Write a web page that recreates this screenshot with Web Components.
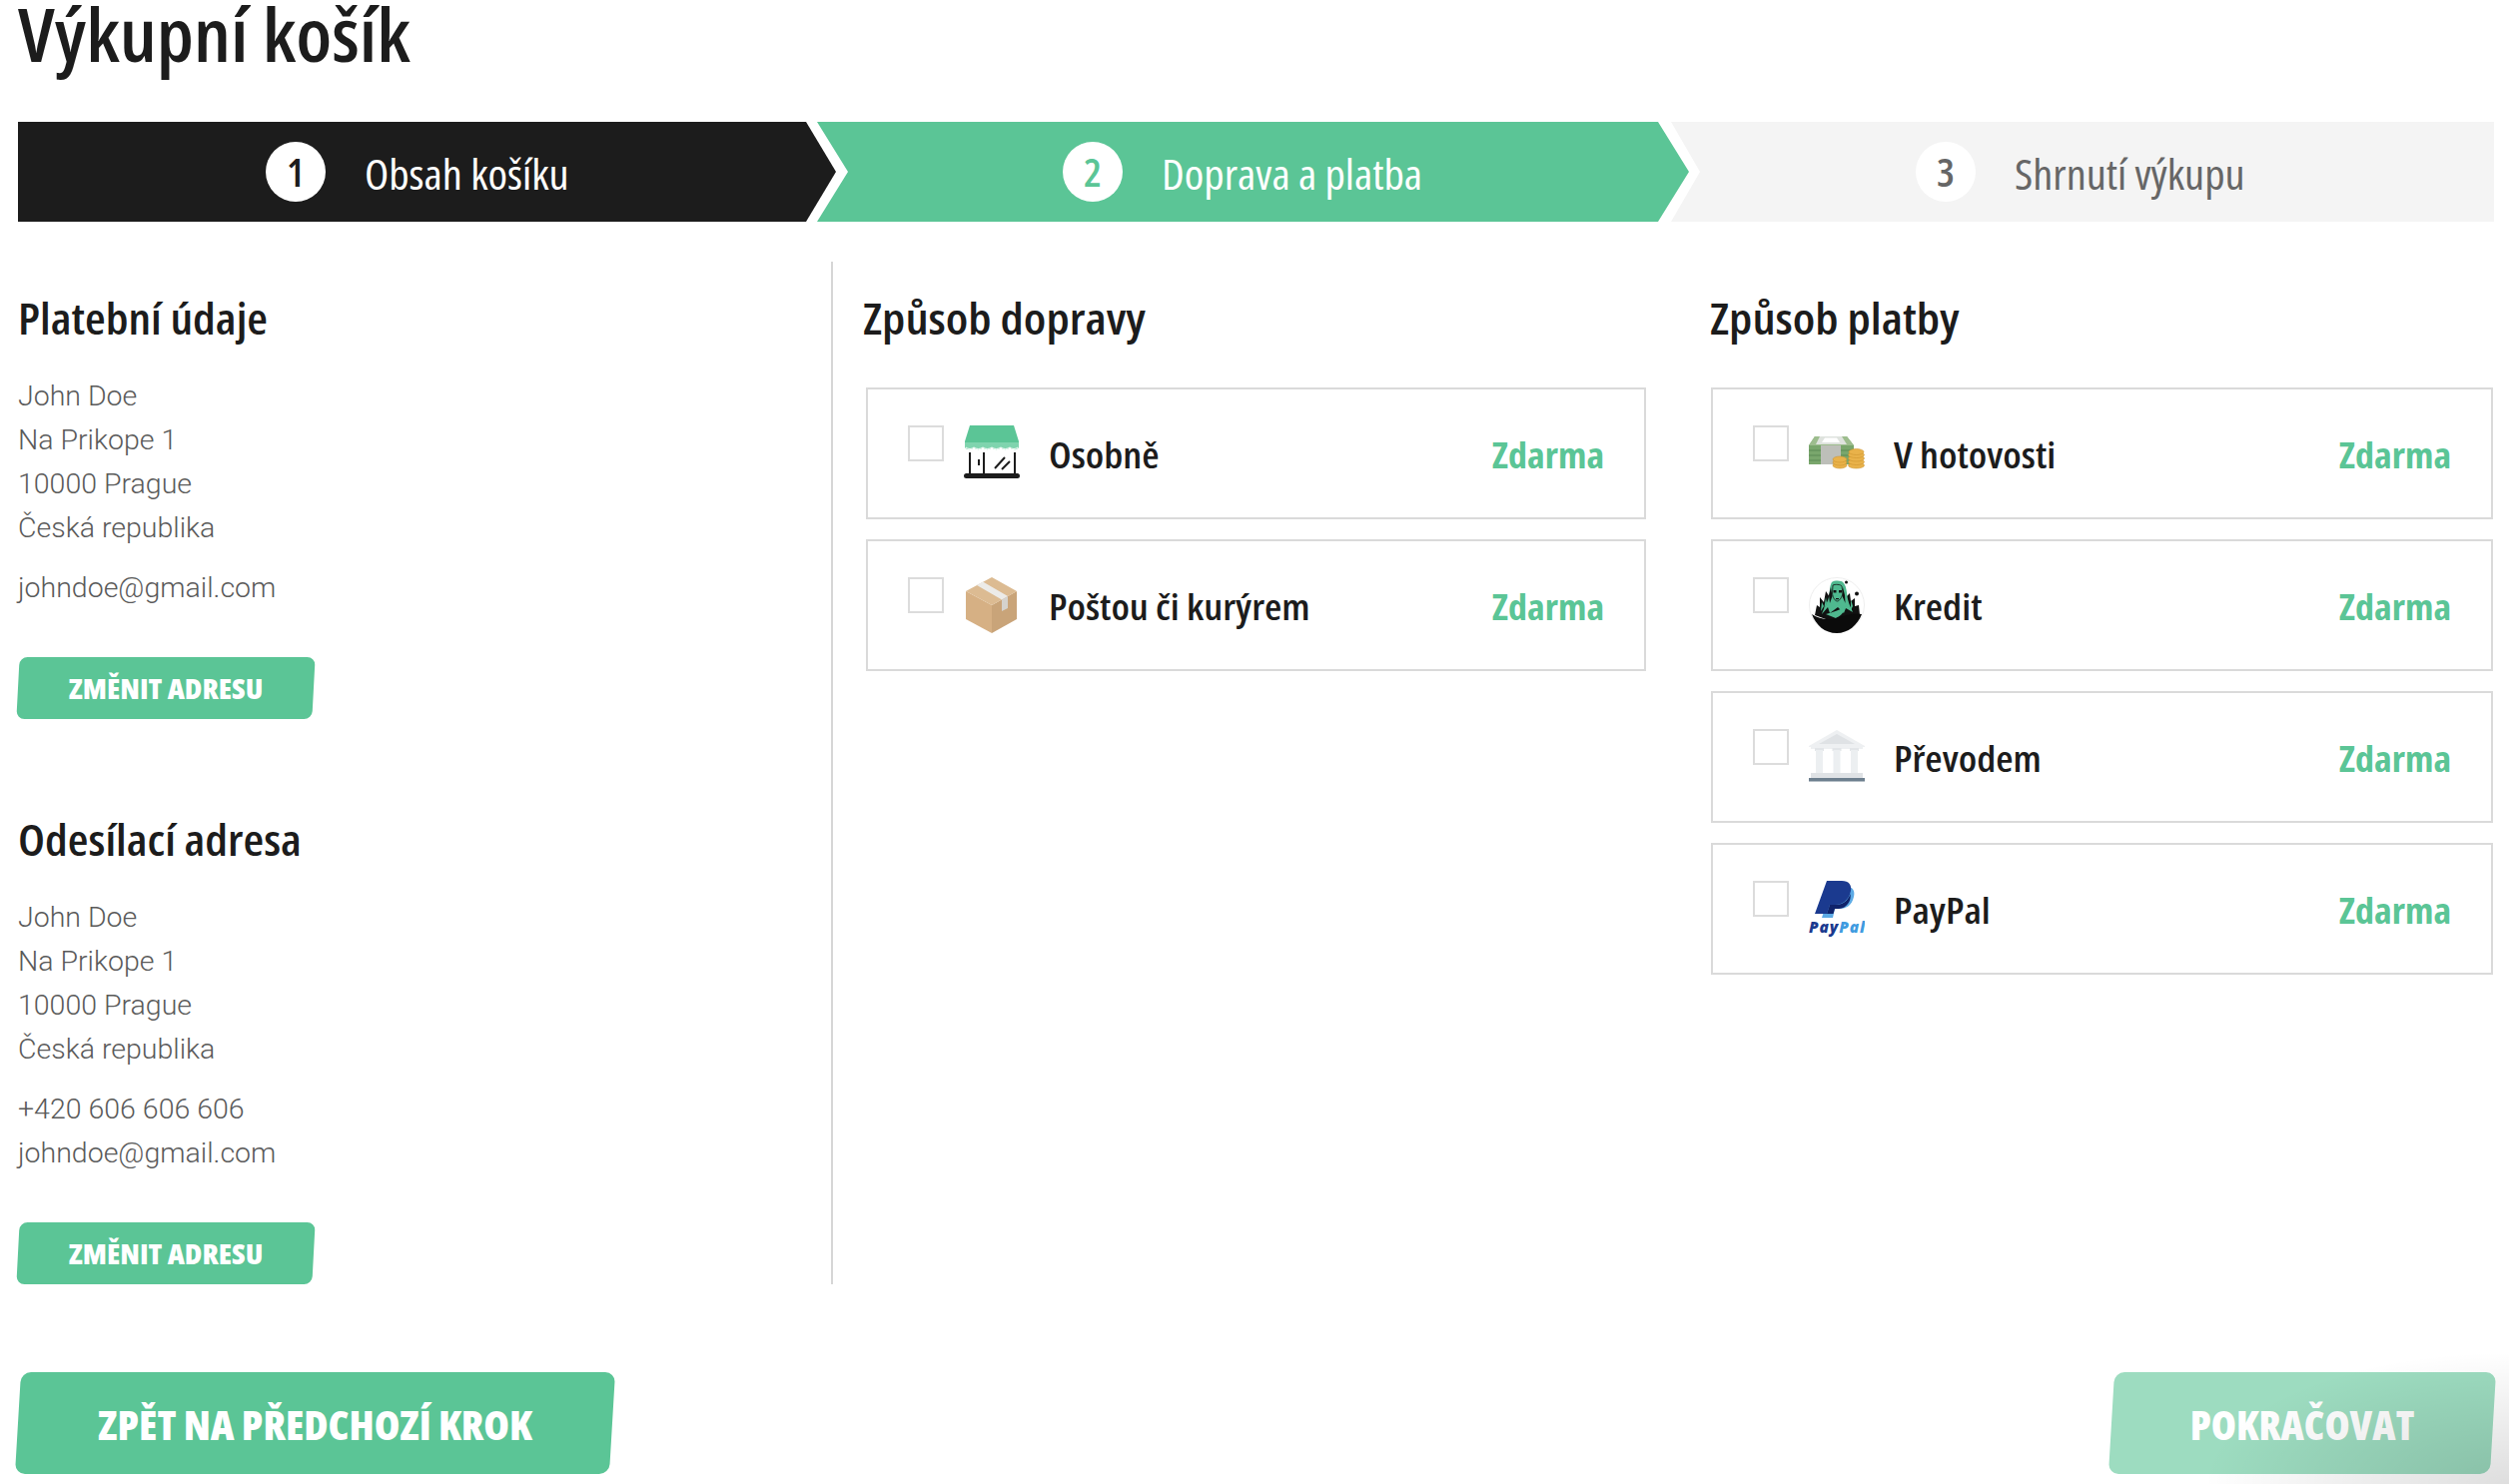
<!DOCTYPE html>
<html lang="cs"><head><meta charset="utf-8"><title>Výkupní košík</title>
<style>
html,body{margin:0;padding:0;background:#fff}
body{font-family:"Open Sans","Liberation Sans",sans-serif;color:#1c1c1c;width:2512px;height:1486px;overflow:hidden;position:relative}
</style></head><body>
<checkout-page>
  <checkout-steps slot="steps">
    <step-item num="1" state="done" style="--w:819px;--pad:248px" label="Obsah košíku"></step-item>
    <step-item num="2" state="active" style="--w:873px;--pad:246px" label="Doprava a platba"></step-item>
    <step-item num="3" state="todo" style="--w:824px;--pad:245px" label="Shrnutí výkupu"></step-item>
  </checkout-steps>
  <div slot="address">
    <address-block heading="Platební údaje" style="--after:64px">
      <div>John Doe</div><div>Na Prikope 1</div><div>10000 Prague</div><div>Česká republika</div>
      <div style="margin-top:16px">johndoe@gmail.com</div>
    </address-block>
    <address-block heading="Odesílací adresa" style="--after:0px">
      <div>John Doe</div><div>Na Prikope 1</div><div>10000 Prague</div><div>Česká republika</div>
      <div style="margin-top:16px">+420 606 606 606</div><div>johndoe@gmail.com</div>
    </address-block>
  </div>
  <option-group slot="shipping" heading="Způsob dopravy" style="--inset:3px">
    <option-card label="Osobně"><store-icon slot="icon"></store-icon></option-card>
    <option-card label="Poštou či kurýrem"><box-icon slot="icon"></box-icon></option-card>
  </option-group>
  <option-group slot="payment" heading="Způsob platby" style="--inset:1px">
    <option-card label="V hotovosti"><cash-icon slot="icon"></cash-icon></option-card>
    <option-card label="Kredit"><kredit-icon slot="icon"></kredit-icon></option-card>
    <option-card label="Převodem"><bank-icon slot="icon"></bank-icon></option-card>
    <option-card label="PayPal"><paypal-icon slot="icon"></paypal-icon></option-card>
  </option-group>
  <action-button slot="back" size="lg" stretch="1.034" style="--w:595px">ZPĚT NA PŘEDCHOZÍ KROK</action-button>
  <action-button slot="next" size="lg" stretch="1.015" disabled style="--w:382px">POKRAČOVAT</action-button>
</checkout-page>
<script>
function def(name,html){
  customElements.define(name,class extends HTMLElement{
    constructor(){super();this.attachShadow({mode:'open'});}
    connectedCallback(){this.shadowRoot.innerHTML=typeof html==='function'?html(this):html;}
  });
}
const CF='"Open Sans",sans-serif;font-stretch:75%';
def('checkout-page',`<style>
:host{display:block;padding:0 16px 0 18px;box-sizing:border-box;width:2512px}
h1{margin:0 0 55px;font:600 74px/67px ${CF};color:#1c1c1c;transform:scaleX(1.05);transform-origin:0 0;width:max-content}
.main{display:grid;grid-template-columns:816px 814px 1fr;margin-top:40px;height:1021px}
.left{border-right:2px solid #d6d6d6;box-sizing:border-box}
.mid{padding-left:30px}
.right{padding-left:64px}
.foot{display:flex;justify-content:space-between;margin-top:91px}
.corner{position:absolute;right:0;bottom:0;width:300px;height:130px;background:radial-gradient(ellipse at 100% 100%,rgba(0,0,0,.13),rgba(0,0,0,.05) 45%,rgba(0,0,0,0) 72%);pointer-events:none}
</style>
<h1>Výkupní košík</h1>
<slot name="steps"></slot>
<div class="main"><div class="left"><slot name="address"></slot></div><div class="mid"><slot name="shipping"></slot></div><div class="right"><slot name="payment"></slot></div></div>
<div class="foot"><slot name="back"></slot><slot name="next"></slot></div>
<div class="corner"></div>`);
def('checkout-steps',`<style>:host{display:flex;height:100px}::slotted(step-item:not(:first-child)){margin-left:-19px}::slotted(step-item:last-child){margin-left:-18px}</style><slot></slot>`);
def('step-item',el=>{
 const s=el.getAttribute('state');
 const bg={done:'#1c1c1c',active:'#5bc596',todo:'#f4f4f4'}[s];
 const fg={done:'#fff',active:'#fff',todo:'#666'}[s];
 const num={done:'#1c1c1c',active:'#5bc596',todo:'#666'}[s];
 const clip={done:'polygon(0 0,789px 0,100% 50%,789px 100%,0 100%)',
  active:'polygon(0 0,842px 0,100% 50%,842px 100%,0 100%,31px 50%)',
  todo:'polygon(0 0,100% 0,100% 100%,0 100%,29px 50%)'}[s];
 return `<style>:host{display:flex;align-items:center;box-sizing:border-box;flex:none;width:var(--w);height:100px;padding-left:var(--pad);gap:39px;background:${bg};clip-path:${clip};position:relative}
 .c{width:60px;height:60px;border-radius:50%;background:#fff;color:${num};display:flex;align-items:center;justify-content:center;font:600 40px/1 ${CF}}
 .t{font:500 41px/1 ${CF};color:${fg};position:relative;top:2px;transform:scaleX(1.085);transform-origin:0 50%}</style>
 <span class="c">${el.getAttribute('num')}</span><span class="t">${el.getAttribute('label')}</span>`;
});
def('address-block',el=>`<style>:host{display:block;padding-top:30px;margin-bottom:var(--after)}
h2{margin:0 0 31px;font:600 44px/52px ${CF};color:#1c1c1c;transform:scaleX(1.08);transform-origin:0 0;width:max-content}
.b{font:300 28.5px/44px Roboto,sans-serif;color:#5a5a5a}
action-button{margin-top:47px}</style>
<h2>${el.getAttribute('heading')}</h2><div class="b"><slot></slot></div><action-button stretch="1.07" style="--w:296px">ZMĚNIT ADRESU</action-button>`);
def('action-button',el=>{
 const lg=el.getAttribute('size')==='lg',dis=el.hasAttribute('disabled');
 return `<style>:host{display:block;position:relative;width:var(--w);height:${lg?102:62}px}
 .bg{position:absolute;inset:0;background:${dis?'#9ddcc0':'#5bc596'};border-radius:${lg?10:8}px;transform:skewX(${lg?-3.4:-3}deg)}
 .t{position:relative;display:flex;align-items:center;justify-content:center;height:100%;top:${lg?2:0}px;color:#fff;font:800 ${lg?40:28}px/1 ${CF};white-space:nowrap;transform:scaleX(${el.getAttribute('stretch')||1})}
 </style><div class="bg"></div><div class="t"><slot></slot></div>`;
});
def('option-group',el=>`<style>:host{display:block;padding-top:30px}
h2{margin:0 0 44px;font:600 44px/52px ${CF};color:#1c1c1c;transform:scaleX(1.105);transform-origin:0 0;width:max-content}
.l{display:flex;flex-direction:column;gap:20px;margin-left:var(--inset)}</style>
<h2>${el.getAttribute('heading')}</h2><div class="l"><slot></slot></div>`);
def('option-card',el=>`<style>:host{display:flex;align-items:center;box-sizing:border-box;height:132px;border:2px solid #dadada;padding:0 40px 0 40px}
.cb{width:36px;height:36px;box-sizing:border-box;border:2px solid #dcdcdc;align-self:flex-start;margin-top:36px;flex:none}
.i{width:56px;height:56px;margin-left:20px;flex:none;display:block}
.w{margin-left:29px;flex:1}
.n{display:inline-block;font:600 36px/1 ${CF};color:#1c1c1c;position:relative;top:2px;transform:scaleX(1.105);transform-origin:0 50%}
.p{font:700 36px/1 ${CF};color:#5bc596;position:relative;top:2px;transform:scaleX(1.06);transform-origin:100% 50%}</style>
<span class="cb"></span><span class="i"><slot name="icon"></slot></span><span class="w"><span class="n">${el.getAttribute('label')}</span></span><span class="p">Zdarma</span>`);
const svg=b=>`<style>:host{display:block;width:56px;height:56px}svg{display:block}</style><svg width="56" height="56" viewBox="0 0 56 56" fill="none">${b}</svg>`;
def('store-icon',svg(`
<path d="M6 0H50L55 16V18H1V16Z" fill="#5bc596"/>
<path d="M1 17H55V22C53 25 48 25 46 22C44 25 39 25 37 22C35 25 30 25 28 22C26 25 21 25 19 22C17 25 12 25 10 22C8 25 3 25 1 22Z" fill="#7fd4ae"/>
<path d="M2 22c2 2 6 2 8 0c2 2 7 2 9 0c2 2 7 2 9 0c2 2 7 2 9 0c2 2 7 2 9 0c2 2 6 2 8 0" stroke="#fff" stroke-width="1"/>
<rect y="48" width="56" height="5" rx="2.5" fill="#1c1c1c"/>
<path d="M6 27V49M20 27V49M51 27V49" stroke="#1c1c1c" stroke-width="2"/>
<path d="M15 34V40M31 43L41 32M38 44L46 36" stroke="#1c1c1c" stroke-width="2"/>`));
def('box-icon',svg(`
<path d="M2 14L28 28V56L2 42Z" fill="#d6b084"/>
<path d="M53 14L28 28V56L53 42Z" fill="#c9a479"/>
<path d="M2 14L28 0L53 14L28 28Z" fill="#dcbb92"/>
<path d="M13 8L19 4.500L44 19L38 22.500Z" fill="#ecebe8"/>
<path d="M38 22.500L44 19V31L38 34Z" fill="#d5d2cd"/>`));
def('cash-icon',svg(`
<path d="M6 11H38L45 20V39H0V20Z" fill="#79a66c"/>
<path d="M6 11H38L45 20H0Z" fill="#9dbd8e"/>
<path d="M11 11H33L38 19H7Z" fill="#dfe3de"/>
<path d="M16 12.500H28L31 17H13Z" fill="#fff"/>
<rect x="12" y="20" width="20" height="19" fill="#bdbfb9"/>
<path d="M0 25H12M0 30H12M0 35H12M32 25H45M32 30H45" stroke="#5d8a55" stroke-width="1"/>
<g fill="#e9b24a" stroke="#cf962f" stroke-width=".6">
<ellipse cx="31" cy="40" rx="7" ry="3"/><ellipse cx="31" cy="37" rx="7" ry="3"/><ellipse cx="31" cy="34" rx="7" ry="3"/>
<ellipse cx="47.500" cy="40" rx="8" ry="3"/><ellipse cx="47.500" cy="36.500" rx="8" ry="3"/><ellipse cx="47.500" cy="33" rx="8" ry="3"/><ellipse cx="47.500" cy="29.500" rx="8" ry="3"/><ellipse cx="47.500" cy="26.500" rx="7.500" ry="3"/></g>`));
def('kredit-icon',svg(`
<circle cx="28" cy="28" r="27.500" fill="#fff" stroke="#eee"/>
<path d="M6 38L8 28L11 30L11 20L15 25L17 14L21 20L22 8L36 8L37 20L41 16L42 24L46 21L46 29L50 28L51 38L28 46Z" fill="#111"/>
<path d="M23 5C26 3 33 3 35 6C38 10 38 17 39 22C40 27 42 30 44 35L37 31L35 36L29 30L21 36L19 30L13 37C15 31 18 27 20 20C21 14 21 8 23 5Z" fill="#4fb98f"/>
<path d="M24 8C26 7 32 7 33 9L34 16C33 21 30 24 28.500 24C26.500 24 24 21 23.500 16Z" fill="#4fb98f" stroke="#111" stroke-width=".8"/>
<path d="M24.500 13h3v2.500h-3zM30 13h3v2.500h-3zM27 21h3v1.200h-3z" fill="#111"/>
<path d="M22 10L23.500 19L21 26L20 18ZM34 10L36 18L36.500 26L33.500 19Z" fill="#111"/>
<path d="M13 25L15 29L12 34ZM17 20L18 26L15 33ZM42 22L44 29L42 33ZM39 24L41 31L38 30Z" fill="#4fb98f"/>
<path d="M17 37C24 35 31 33 37 29C36 34 32 39 27 41Z" fill="#4fb98f"/>
<path d="M3 37C10 42 20 43 27 41C35 38 44 36 53 37C49 48 39 56 28 56C16 56 7 48 3 37Z" fill="#0b0b0b"/>
<circle cx="37.500" cy="5" r="1.500" fill="#111"/><circle cx="48" cy="16.500" r="2" fill="#111"/>`));
def('bank-icon',svg(`
<path d="M28 1L56 17V18H0V17Z" fill="#eef0f2"/>
<path d="M28 5L46 15H10Z" fill="#dfe2e5"/>
<rect x="2" y="16" width="52" height="4" fill="#eef0f2"/>
<rect x="6" y="19" width="9" height="3" fill="#e2e5e8"/><rect x="23.500" y="19" width="9" height="3" fill="#e2e5e8"/><rect x="41" y="19" width="9" height="3" fill="#e2e5e8"/>
<rect x="7" y="21" width="7" height="24" fill="#eceff1"/><rect x="24.500" y="21" width="7" height="24" fill="#eceff1"/><rect x="42" y="21" width="7" height="24" fill="#eceff1"/>
<rect x="2" y="44" width="52" height="5" fill="#dfe2e5"/>
<rect y="49" width="56" height="3.500" fill="#6d7f8e"/>`));
def('paypal-icon',svg(`
<path d="M23 6H38C44 6 46.500 10 45 16C43 25 37 28 30 28H26L24 37H13Z" fill="#3f9be0" opacity=".85"/>
<path d="M18 0H33C40 0 43 4 42 10C40 20 33 24 26 24H21L18 33H6Z" fill="#1b3a8f"/>
<path d="M21 24H26C33 24 39 21 41.500 13C43 19 38 28 30 28H26L24.500 33H18Z" fill="#10236b"/>
<text x="0" y="52" textLength="56" font-family="'Open Sans',sans-serif" font-weight="800" font-style="italic" font-size="15.500" fill="#1b3a8f">Pay<tspan fill="#3f9be0">Pal</tspan></text>`));
</script>
</body></html>
